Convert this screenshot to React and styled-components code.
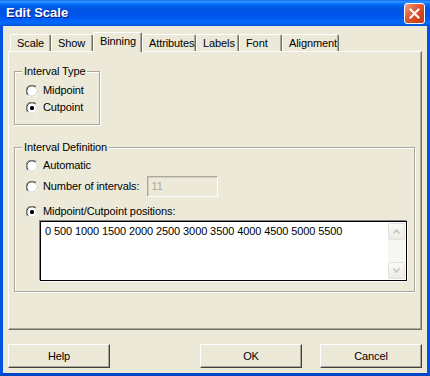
import React from 'react';
import styled, { createGlobalStyle } from 'styled-components';

const GlobalStyle = createGlobalStyle`
  html, body {
    margin: 0;
    padding: 0;
    background: #ece9d8;
  }
  * {
    box-sizing: border-box;
  }
`;

const Window = styled.div`
  width: 430px;
  height: 376px;
  overflow: hidden;
  display: flex;
  flex-direction: column;
  font-family: 'Liberation Sans', Arial, sans-serif;
  font-size: 11px;
  letter-spacing: -0.1px;
  color: #000;
`;

const TitleBar = styled.div`
  height: 26px;
  flex: 0 0 26px;
  display: flex;
  align-items: flex-start;
  justify-content: space-between;
  padding: 3px 5px 0 6px;
  background: linear-gradient(
    to bottom,
    #0058ee 0%,
    #3593ff 4%,
    #288eff 8%,
    #127dff 12%,
    #036ffc 16%,
    #0262ee 22%,
    #0057e5 30%,
    #0054e3 40%,
    #0055eb 60%,
    #005bf5 72%,
    #026afe 84%,
    #0062ef 92%,
    #0052d6 100%
  );
`;

const Title = styled.span`
  font-family: 'Liberation Sans', Arial, sans-serif;
  font-weight: bold;
  font-size: 13px;
  letter-spacing: 0;
  line-height: 20px;
  color: #fff;
  text-shadow: 1px 1px 0 #0a1883;
`;

const CloseButton = styled.div`
  width: 21px;
  height: 21px;
  border: 1px solid #fff;
  border-radius: 3px;
  background: linear-gradient(135deg, #f2a486 0%, #e4643f 35%, #d3431e 70%, #c23a18 100%);
  display: flex;
  align-items: center;
  justify-content: center;
`;

const Body = styled.div`
  flex: 1;
  display: flex;
  flex-direction: column;
  background: #ece9d8;
  border-left: 3px solid #0054e3;
  border-right: 3px solid #0054e3;
  border-bottom: 3px solid #0046c4;
  padding: 6px 5px 5px 5px;
`;

const TabStrip = styled.div`
  height: 19px;
  display: flex;
  align-items: flex-end;
  padding-left: 2px;
  position: relative;
  z-index: 1;
`;

const Tab = styled.div`
  width: ${(p) => p.$w}px;
  height: ${(p) => (p.$active ? 20 : 17)}px;
  margin-bottom: ${(p) => (p.$active ? -1 : 0)}px;
  background: #ece9d8;
  border-top: 1px solid #fff;
  border-left: 1px solid #fff;
  border-right: 1px solid #716f64;
  box-shadow: inset -1px 0 0 #aca899;
  border-radius: 2px 2px 0 0;
  display: flex;
  align-items: ${(p) => (p.$active ? 'flex-start' : 'center')};
  padding: ${(p) => (p.$active ? '2px 0 0 6px' : '0 0 0 6px')};
  line-height: 13px;
  white-space: nowrap;
`;

const Panel = styled.div`
  height: 279px;
  flex: 0 0 279px;
  border-top: 1px solid #fff;
  border-left: 1px solid #fff;
  border-right: 1px solid #716f64;
  border-bottom: 1px solid #716f64;
  box-shadow: inset -1px -1px 0 #aca899;
  padding: 19px 0 0 5px;
  display: flex;
  flex-direction: column;
  align-items: flex-start;
`;

const GroupBox = styled.div`
  position: relative;
  width: ${(p) => p.$w}px;
  height: ${(p) => p.$h}px;
  margin-top: ${(p) => p.$mt || 0}px;
  border: 1px solid #aca899;
  box-shadow: inset 1px 1px 0 #fff, 1px 1px 0 #fff;
  padding: ${(p) => p.$pad};
  display: flex;
  flex-direction: column;
`;

const Legend = styled.span`
  position: absolute;
  top: -7px;
  left: 7px;
  padding: 0 2px;
  line-height: 13px;
  background: #ece9d8;
  white-space: nowrap;
`;

const RadioRow = styled.div`
  height: ${(p) => p.$h || 17}px;
  margin-top: ${(p) => p.$mt || 0}px;
  display: flex;
  align-items: center;
  gap: 5px;
  line-height: 13px;
  white-space: nowrap;
`;

const NumberBox = styled.div`
  width: 71px;
  height: 21px;
  margin-left: 3px;
  border: 1px solid;
  border-color: #aca899 #fff #fff #aca899;
  box-shadow: inset 1px 1px 0 #d4d0c8;
  background: #ece9d8;
  color: #aca899;
  padding: 3px 0 0 3px;
  line-height: 13px;
`;

const PositionsBox = styled.div`
  width: 367px;
  height: 60px;
  margin: 1px 0 0 14px;
  border: 1px solid #000;
  box-shadow: -1px -1px 0 #808080, 1px 1px 0 #fff;
  background: #fff;
  display: flex;
  justify-content: space-between;
`;

const PositionsText = styled.div`
  padding: 3px 0 0 4px;
  line-height: 13px;
  white-space: nowrap;
`;

const ScrollBar = styled.div`
  width: 17px;
  display: flex;
  flex-direction: column;
  justify-content: space-between;
  background: #f7f7f2;
  margin: 1px 1px 1px 0;
`;

const ScrollButton = styled.div`
  height: 17px;
  border: 1px solid #e4e2d8;
  border-radius: 2px;
  background: linear-gradient(to bottom, #f9f9f6, #ecebe5);
  display: flex;
  align-items: center;
  justify-content: center;
`;

const ButtonRow = styled.div`
  margin-top: 14px;
  display: flex;
  align-items: center;
  gap: 18px;
`;

const Button = styled.div`
  width: 102px;
  height: 24px;
  margin-right: ${(p) => p.$mr || 0}px;
  border-top: 1px solid #fff;
  border-left: 1px solid #fff;
  border-right: 1px solid #404040;
  border-bottom: 1px solid #404040;
  box-shadow: inset -1px -1px 0 #aca899;
  background: #ece9d8;
  display: flex;
  align-items: center;
  justify-content: center;
  line-height: 13px;
`;

const Radio = ({ checked }) => (
  <svg width="12" height="12" viewBox="0 0 12 12">
    <circle cx="6" cy="6" r="5.5" fill="#fff" />
    <path d="M1.6 10.4 A6 6 0 0 1 10.4 1.6" fill="none" stroke="#808080" strokeWidth="1" />
    <path d="M2.3 9.7 A5 5 0 0 1 9.7 2.3" fill="none" stroke="#404040" strokeWidth="1" />
    <path d="M10.4 1.6 A6 6 0 0 1 1.6 10.4" fill="none" stroke="#fff" strokeWidth="1" />
    <path d="M9.7 2.3 A5 5 0 0 1 2.3 9.7" fill="none" stroke="#d4d0c8" strokeWidth="1" />
    {checked && <rect x="4" y="4" width="4" height="4" rx="1.5" fill="#000" />}
  </svg>
);

const Chevron = ({ up }) => (
  <svg width="7" height="5" viewBox="0 0 7 5">
    <path
      d={up ? 'M0.5 4.5 L3.5 1 L6.5 4.5' : 'M0.5 0.5 L3.5 4 L6.5 0.5'}
      fill="none"
      stroke="#c4c2b6"
      strokeWidth="1.4"
    />
  </svg>
);

const tabs = [
  { label: 'Scale', w: 41 },
  { label: 'Show', w: 42 },
  { label: 'Binning', w: 49, active: true },
  { label: 'Attributes', w: 54 },
  { label: 'Labels', w: 43 },
  { label: 'Font', w: 43 },
  { label: 'Alignment', w: 57 },
];

export default function App() {
  return (
    <>
      <GlobalStyle />
      <Window>
        <TitleBar>
          <Title>Edit Scale</Title>
          <CloseButton>
            <svg width="11" height="11" viewBox="0 0 11 11">
              <path d="M1.5 1.5 L9.5 9.5 M9.5 1.5 L1.5 9.5" stroke="#fff" strokeWidth="2" strokeLinecap="square" />
            </svg>
          </CloseButton>
        </TitleBar>
        <Body>
          <TabStrip>
            {tabs.map((t) => (
              <Tab key={t.label} $w={t.w} $active={t.active}>
                {t.label}
              </Tab>
            ))}
          </TabStrip>
          <Panel>
            <GroupBox $w={86} $h={54} $pad="10px 0 0 11px">
              <Legend>Interval Type</Legend>
              <RadioRow>
                <Radio />
                Midpoint
              </RadioRow>
              <RadioRow>
                <Radio checked />
                Cutpoint
              </RadioRow>
            </GroupBox>
            <GroupBox $w={401} $h={145} $mt={22} $pad="9px 0 0 11px">
              <Legend>Interval Definition</Legend>
              <RadioRow>
                <Radio />
                Automatic
              </RadioRow>
              <RadioRow $h={21} $mt={2}>
                <Radio />
                Number of intervals:
                <NumberBox>11</NumberBox>
              </RadioRow>
              <RadioRow $mt={6}>
                <Radio checked />
                Midpoint/Cutpoint positions:
              </RadioRow>
              <PositionsBox>
                <PositionsText>0 500 1000 1500 2000 2500 3000 3500 4000 4500 5000 5500</PositionsText>
                <ScrollBar>
                  <ScrollButton>
                    <Chevron up />
                  </ScrollButton>
                  <ScrollButton>
                    <Chevron />
                  </ScrollButton>
                </ScrollBar>
              </PositionsBox>
            </GroupBox>
          </Panel>
          <ButtonRow>
            <Button $mr={72}>Help</Button>
            <Button>OK</Button>
            <Button>Cancel</Button>
          </ButtonRow>
        </Body>
      </Window>
    </>
  );
}
